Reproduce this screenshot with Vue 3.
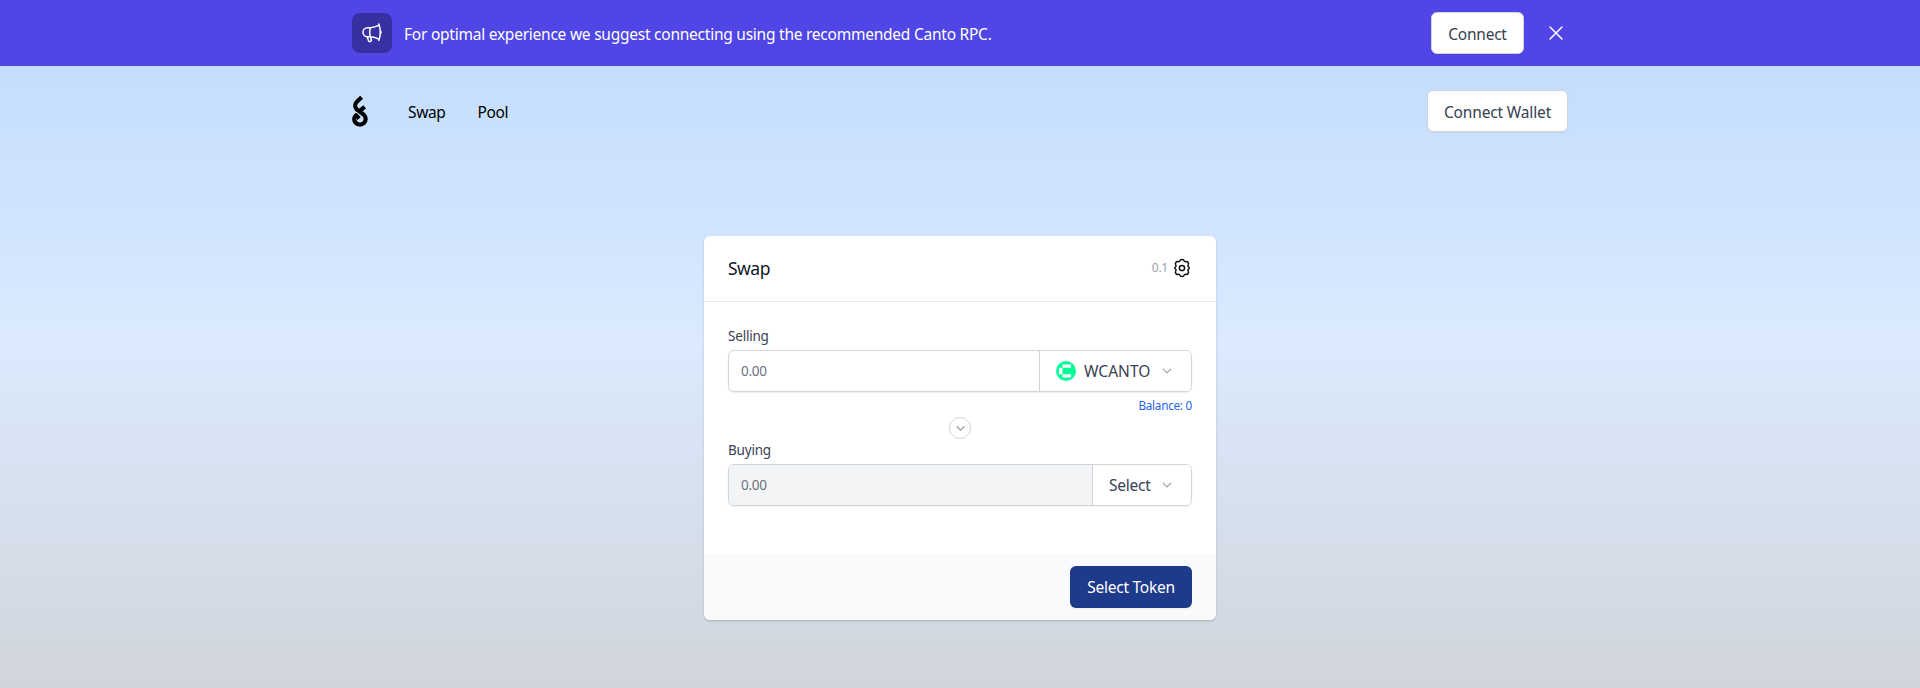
<script setup>
const chevron = 'm19.5 8.25-7.5 7.5-7.5-7.5'
const navigation = ['Swap', 'Pool']
</script>

<template>
  <div class="page">
    <div class="banner">
      <div class="container banner-row">
        <span class="badge">
          <svg viewBox="0 0 24 24" class="icon-24"><path d="M10.34 15.84c-.688-.06-1.386-.09-2.09-.09H7.5a4.5 4.5 0 1 1 0-9h.75c.704 0 1.402-.03 2.09-.09m0 9.18c.253.962.584 1.892.985 2.783.247.55.06 1.21-.463 1.511l-.657.38c-.551.318-1.26.117-1.527-.461a20.845 20.845 0 0 1-1.44-4.282m3.102.069a18.03 18.03 0 0 1-.59-4.59c0-1.586.205-3.124.59-4.59m0 9.18a23.848 23.848 0 0 1 8.835 2.535M10.34 6.66a23.847 23.847 0 0 0 8.835-2.535m0 0A23.74 23.74 0 0 0 18.795 3m.38 1.125a23.91 23.91 0 0 1 1.014 5.395m-1.014 8.855c-.118.38-.245.754-.38 1.125m.38-1.125a23.91 23.91 0 0 0 1.014-5.395m0-3.46c.495.413.811 1.035.811 1.73 0 .695-.316 1.317-.811 1.73m0-3.46a24.347 24.347 0 0 1 0 3.46" /></svg>
        </span>
        <p class="banner-text">For optimal experience we suggest connecting using the recommended Canto RPC.</p>
        <button class="btn connect">Connect</button>
        <svg viewBox="0 0 24 24" class="icon-24"><path d="M6 18 18 6M6 6l12 12" /></svg>
      </div>
    </div>

    <header class="container topbar">
      <svg class="logo" viewBox="0 0 16 32"><path d="M9.6 2.2 4.6 7C2.7 9.2 2.8 12.3 4.6 14.2L11.8 19.6C14.300 22.200 14.400 26 11.800 28.200C9.300 30.200 5.800 29.900 3.700 27.700C1.600 25.500 1.700 22.300 4 20.200L7.200 23.400M12.700 11.800 7.200 16.400" /></svg>
      <nav><a v-for="item in navigation" :key="item">{{ item }}</a></nav>
      <button class="btn wallet">Connect Wallet</button>
    </header>

    <main class="card">
      <div class="card-head">
        <h1>Swap</h1>
        <div class="settings">
          <span>0.1</span>
          <svg viewBox="0 0 20 20" class="gear"><path d="M8.25 2.3c.5-1.2 3-1.2 3.5 0 .4 1.1 1.3 1.6 2.5 1.3 1.4-.4 2.9 1.8 2.1 3-.7 1-.8 1.3-.1 2.1 1.3.8 1.3 1.8 0 2.6-.7.8-.6 1.1.1 2.1.8 1.2-.7 3.4-2.1 3-1.2-.3-2.1.2-2.5 1.3-.5 1.2-3 1.2-3.5 0-.4-1.1-1.3-1.6-2.5-1.3-1.4.4-2.9-1.8-2.1-3 .7-1 .8-1.3.1-2.1-1.3-.8-1.3-1.8 0-2.6.7-.8.6-1.1-.1-2.1-.8-1.2.7-3.4 2.1-3 1.2.3 2.1-.2 2.5-1.3Z" /><circle cx="10" cy="10" r="2.6" /></svg>
        </div>
      </div>
      <div class="card-body">
        <label>Selling</label>
        <div class="field">
          <div class="amount">0.00</div>
          <button class="token canto">
            <svg class="coin" viewBox="0 0 20 20"><circle cx="10" cy="10" r="10" fill="#06fc99" /><path d="M6.5 3.5H15v3.3H6.5zM3 6.8h3.5v6.5H3zM6.5 13.3H15v3.3H6.5z" fill="#fff" /></svg>
            <span>WCANTO</span>
            <svg viewBox="0 0 24 24" class="chevron"><path :d="chevron" /></svg>
          </button>
        </div>
        <p class="balance">Balance: 0</p>
        <div class="flip"><svg viewBox="0 0 24 24"><path :d="chevron" /></svg></div>
        <label>Buying</label>
        <div class="field">
          <div class="amount disabled">0.00</div>
          <button class="token select">
            <span>Select</span>
            <svg viewBox="0 0 24 24" class="chevron"><path :d="chevron" /></svg>
          </button>
        </div>
      </div>
      <div class="card-foot"><button class="primary">Select Token</button></div>
    </main>
  </div>
</template>

<style>
body { margin: 0; }
</style>

<style scoped>
* { box-sizing: border-box; }
.page {
  height: 688px;
  overflow: hidden;
  font: 15.5px/24px "Noto Sans", "Open Sans", sans-serif;
  letter-spacing: -0.24px;
  background: linear-gradient(#bfdbfe, #dbeafe 50%, #d1d5db);
}
button { font: inherit; letter-spacing: inherit; margin: 0; padding: 0; white-space: nowrap; }
h1, p { margin: 0; font-weight: 400; }
svg { display: block; flex: none; fill: none; stroke: currentColor; stroke-width: 1.5; stroke-linecap: round; stroke-linejoin: round; }
.container { width: 1216px; margin: 0 auto; display: flex; align-items: center; }
.banner { background: #4f46e5; color: #fff; }
.banner-row { height: 66px; }
.badge { display: flex; width: 40px; height: 40px; align-items: center; justify-content: center; border-radius: 8px; background: #3730a3; }
.icon-24 { width: 24px; height: 24px; }
.banner-text { flex: 1; margin-left: 12px; padding-top: 2px; white-space: nowrap; }
.btn { height: 42px; padding-top: 2px; border: 1px solid #d1d5db; border-radius: 6px; background: #fff; color: #374151; box-shadow: 0 1px 2px rgba(0, 0, 0, 0.05); }
.connect { width: 93px; margin-right: 20px; }
.topbar { height: 90px; }
.logo { width: 16px; height: 32px; stroke: #000; stroke-width: 4.2; stroke-linecap: butt; }
nav { display: flex; flex: 1; gap: 32px; margin-left: 40px; padding-top: 2px; color: #000; letter-spacing: -0.35px; }
.wallet { width: 141px; letter-spacing: -0.15px; }
.card { width: 512px; height: 384px; margin: 80px auto 0; border-radius: 6px; overflow: hidden; background: #fff; box-shadow: 0 1px 3px rgba(0, 0, 0, 0.1), 0 1px 2px rgba(0, 0, 0, 0.12); }
.card-head { height: 66px; padding: 0 24px; display: flex; align-items: center; justify-content: space-between; border-bottom: 1px solid #e5e7eb; }
h1 { padding-bottom: 1px; font-size: 17.5px; letter-spacing: -0.5px; color: #111827; }
.settings { display: flex; align-items: center; gap: 4px; padding-bottom: 1px; font-size: 12px; color: #9ca3af; }
.gear { width: 20px; height: 20px; color: #111; }
.card-body { height: 252px; padding: 24px 24px 0; }
label { display: block; height: 24px; font-size: 13.5px; line-height: 20px; letter-spacing: -0.2px; color: #374151; }
.field { display: flex; height: 42px; border: 1px solid #d1d5db; border-radius: 6px; overflow: hidden; box-shadow: 0 1px 2px rgba(0, 0, 0, 0.07); }
.amount { flex: 1; padding-left: 12px; font-size: 13.5px; line-height: 41px; color: #6b7280; }
.disabled { background: #f3f4f6; }
.token { display: flex; align-items: center; border: 0; border-left: 1px solid #d1d5db; background: #fff; color: #374151; }
.canto { width: 152px; padding-left: 16px; letter-spacing: 0.05px; }
.select { width: 99px; padding-left: 16px; }
.coin { width: 20px; height: 20px; margin-right: 8px; stroke: none; }
.chevron { width: 12px; height: 12px; margin-left: auto; margin-right: 18px; stroke: #9ca3af; stroke-width: 2.5; }
.balance { height: 24px; padding-top: 3px; text-align: right; font-size: 11.7px; line-height: 20px; color: #2563eb; }
.flip { display: flex; width: 22px; height: 22px; margin: 1px auto; align-items: center; justify-content: center; border: 1px solid #d1d5db; border-radius: 50%; color: #9ca3af; }
.flip svg { width: 11px; height: 11px; stroke-width: 3; }
.card-foot { display: flex; height: 66px; padding: 12px 24px; justify-content: flex-end; background: #f9fafb; }
.primary { width: 122px; height: 42px; border: 0; border-radius: 6px; background: #1e3a8a; color: #fff; box-shadow: 0 1px 2px rgba(0, 0, 0, 0.05); }
</style>
